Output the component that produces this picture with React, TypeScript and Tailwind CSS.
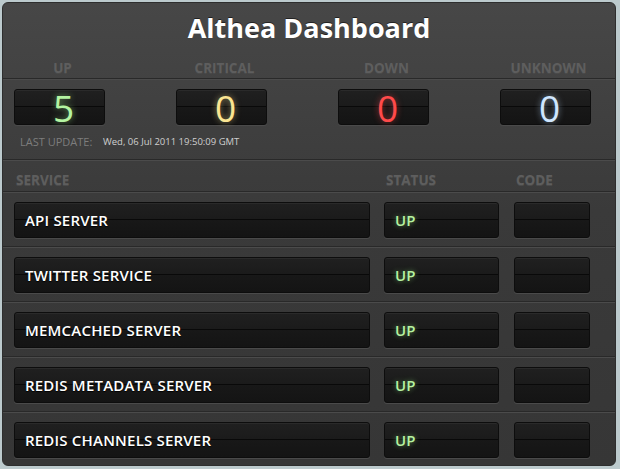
import React from "react";

const counters = [
  { label: "UP", value: "5", color: "text-[#b4f5a2] [text-shadow:0_0_6px_rgba(160,255,140,0.55)]" },
  { label: "CRITICAL", value: "0", color: "text-[#fbe592] [text-shadow:0_0_6px_rgba(255,230,140,0.55)]" },
  { label: "DOWN", value: "0", color: "text-[#ff4a4a] [text-shadow:0_0_6px_rgba(255,70,70,0.55)]" },
  { label: "UNKNOWN", value: "0", color: "text-[#cfe6ff] [text-shadow:0_0_6px_rgba(190,220,255,0.55)]" },
];

const services = [
  "API SERVER",
  "TWITTER SERVICE",
  "MEMCACHED SERVER",
  "REDIS METADATA SERVER",
  "REDIS CHANNELS SERVER",
];

const boxClass =
  "relative h-[36px] rounded-[3px] border border-[#0d0d0d] bg-[linear-gradient(to_bottom,#202020_0%,#1b1b1b_46%,#090909_46%,#090909_49%,#181818_49%,#141414_100%)] shadow-[0_1px_0_#4a4a4a,inset_0_1px_0_#2a2a2a]";

function Divider() {
  return (
    <div>
      <div className="h-px bg-[#292929]" />
      <div className="h-px bg-[#4b4b4b]" />
    </div>
  );
}

export default function App() {
  return (
    <div className="w-[620px] h-[469px] bg-[#bccacd] pl-[2px] pt-[2px] font-['Open_Sans',sans-serif]">
      <div className="w-[614px] h-[464px] overflow-hidden rounded-[6px] border border-[#2e2e2e] bg-[linear-gradient(to_bottom,#474747,#3a3a3a_45%,#363636)]">
        <h1 className="pt-[8px] text-center text-[27px] leading-[34px] font-bold text-white [text-shadow:0_-1px_0_#222]">
          Althea Dashboard
        </h1>

        <div className="mt-[15px] flex justify-between pl-[11px] pr-[24px]">
          {counters.map((c) => (
            <div key={c.label} className="w-[91px] pl-[6px] text-center text-[13.5px] leading-[16px] font-bold text-[#5e5e5e] [text-shadow:0_1px_0_#4a4a4a]">
              {c.label}
            </div>
          ))}
        </div>
        <div className="mt-[2px]">
          <Divider />
        </div>

        <div className="mt-[9px] flex justify-between pl-[11px] pr-[24px]">
          {counters.map((c) => (
            <div key={c.label} className={`${boxClass} w-[91px] flex items-center justify-center pl-[8px]`}>
              <span className={`text-[37px] leading-none ${c.color}`}>{c.value}</span>
            </div>
          ))}
        </div>

        <div className="mt-[10px] flex items-center pl-[17px] leading-[14px]">
          <span className="w-[83px] text-[11px] text-[#7d7d7d]">LAST UPDATE:</span>
          <span className="text-[9.5px] text-[#cfcfcf]">Wed, 06 Jul 2011 19:50:09 GMT</span>
        </div>

        <div className="mt-[10px]">
          <Divider />
        </div>

        <div className="mt-[11px] flex pl-[13px] text-[13.5px] leading-[16px] font-bold text-[#5e5e5e] [text-shadow:0_1px_0_#4a4a4a]">
          <span className="w-[370px]">SERVICE</span>
          <span className="w-[130px]">STATUS</span>
          <span>CODE</span>
        </div>
        <div className="mt-[3px]">
          <Divider />
        </div>

        {services.map((s, i) => (
          <div key={s}>
            <div className="flex gap-[14px] px-[11px] pt-[9px] pb-[8px]">
              <div className={`${boxClass} w-[356px] flex items-center pl-[10px]`}>
                <span className="text-[15px] font-semibold tracking-[0.2px] text-white [text-shadow:0_1px_1px_#000]">{s}</span>
              </div>
              <div className={`${boxClass} w-[115px] flex items-center pl-[10px]`}>
                <span className="text-[15px] font-semibold text-[#b6f2a0] [text-shadow:0_0_5px_rgba(160,255,140,0.5)]">UP</span>
              </div>
              <div className={`${boxClass} ml-px w-[76px]`} />
            </div>
            {i < services.length - 1 && <Divider />}
          </div>
        ))}
      </div>
    </div>
  );
}
